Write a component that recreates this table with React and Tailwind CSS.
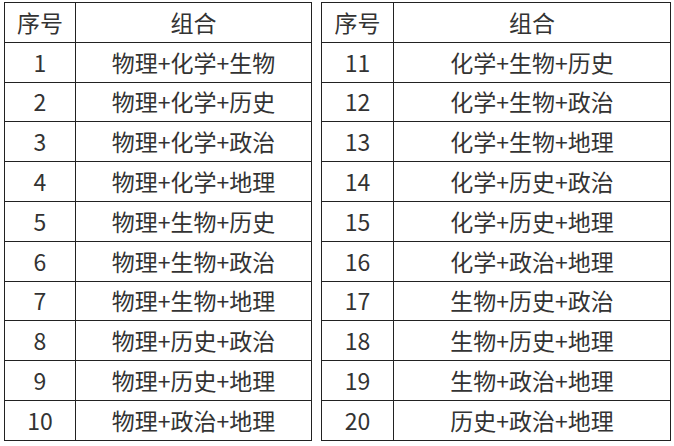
const leftRows = [
  ['1', '物理+化学+生物'],
  ['2', '物理+化学+历史'],
  ['3', '物理+化学+政治'],
  ['4', '物理+化学+地理'],
  ['5', '物理+生物+历史'],
  ['6', '物理+生物+政治'],
  ['7', '物理+生物+地理'],
  ['8', '物理+历史+政治'],
  ['9', '物理+历史+地理'],
  ['10', '物理+政治+地理'],
];

const rightRows = [
  ['11', '化学+生物+历史'],
  ['12', '化学+生物+政治'],
  ['13', '化学+生物+地理'],
  ['14', '化学+历史+政治'],
  ['15', '化学+历史+地理'],
  ['16', '化学+政治+地理'],
  ['17', '生物+历史+政治'],
  ['18', '生物+历史+地理'],
  ['19', '生物+政治+地理'],
  ['20', '历史+政治+地理'],
];

const cell = 'border border-[#222] h-[39.8px] p-0 text-center align-middle';

const ComboTable = ({ rows, width, firstCol }) => (
  <table className="border-collapse table-fixed" style={{ width }}>
    <colgroup>
      <col style={{ width: firstCol }} />
      <col />
    </colgroup>
    <thead>
      <tr>
        <th className={`${cell} font-normal`}>序号</th>
        <th className={`${cell} font-normal`}>组合</th>
      </tr>
    </thead>
    <tbody>
      {rows.map(([num, combo]) => (
        <tr key={num}>
          <td className={cell}>{num}</td>
          <td className={cell}>{combo}</td>
        </tr>
      ))}
    </tbody>
  </table>
);

export default function App() {
  return (
    <div
      className="w-[674px] h-[446px] bg-white text-[#333] text-[23px] leading-none pt-[2px] pl-[4px] flex items-start gap-[9px]"
      style={{ fontFamily: '"Noto Sans CJK SC", "Noto Sans", sans-serif' }}
    >
      <ComboTable rows={leftRows} width={308} firstCol={71} />
      <ComboTable rows={rightRows} width={350} firstCol={72} />
    </div>
  );
}
